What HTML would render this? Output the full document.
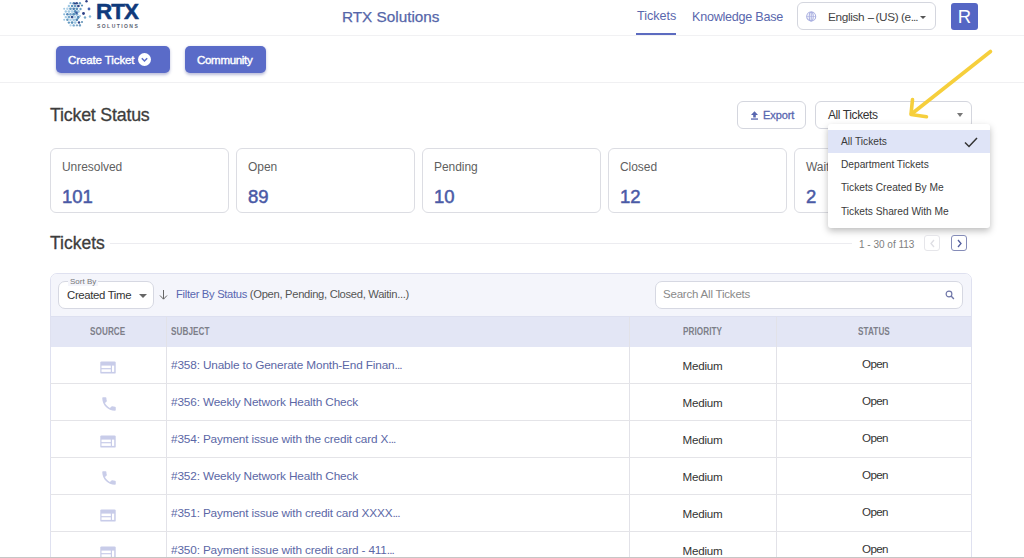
<!DOCTYPE html>
<html><head><meta charset="utf-8">
<style>
*{box-sizing:border-box;margin:0;padding:0}
html,body{width:1024px;height:558px;overflow:hidden;background:#fff;font-family:"Liberation Sans",sans-serif;color:#333}
.abs{position:absolute;white-space:nowrap}
svg{display:block}
.hdr{position:absolute;left:0;top:0;width:1024px;height:36px;border-bottom:1px solid #f1f1f3}
.logo{left:61px;top:0px}
.rtx{left:96px;top:-1px;font-size:22.4px;font-weight:bold;color:#0f3a7c;letter-spacing:-0.9px;-webkit-text-stroke:0.5px #0f3a7c}
.sol{left:97px;top:23px;font-size:5px;font-weight:bold;color:#5b6272;letter-spacing:1.45px}
.brand{left:342px;top:8px;font-size:15.3px;color:#5566a9;-webkit-text-stroke:0.25px #5566a9}
.nav1{left:637px;top:9px;font-size:12.6px;color:#5a67ad}
.nav1u{left:636px;top:33px;width:40px;height:2px;background:#5c6bc0}
.nav2{left:692px;top:10px;font-size:12.6px;color:#5a67ad;letter-spacing:-0.25px}
.lang{left:797px;top:2px;width:139px;height:28px;border:1px solid #d4d6de;border-radius:6px}
.langt{left:828px;top:10px;font-size:11.8px;color:#444;letter-spacing:-0.35px}
.caret{width:0;height:0;border-left:3.5px solid transparent;border-right:3.5px solid transparent;border-top:3.5px solid #555}
.avatar{left:951px;top:3px;width:27px;height:27px;background:#5566c4;border-radius:3px;color:#fff;font-size:18.5px;text-align:center;line-height:27px}
.tb{position:absolute;left:0;top:36px;width:1024px;height:47px;border-bottom:1px solid #f0f0f2}
.btn{position:absolute;top:46px;height:27px;background:#5a6bc8;border-radius:5px;color:#fff;font-size:11.5px;font-weight:bold;box-shadow:0 1.5px 3px rgba(60,70,150,.35)}
.btn span{position:absolute;top:8px;letter-spacing:-0.1px;font-weight:normal;-webkit-text-stroke:0.4px #fff}
.h1{left:50px;top:105px;font-size:17.8px;color:#3d3d3d;letter-spacing:-0.2px;-webkit-text-stroke:0.3px #3d3d3d}
.obtn{top:101px;height:28px;border:1px solid #d4d6de;border-radius:6px;background:#fff}
.card{top:148px;width:179px;height:65px;border:1px solid #dcdde3;border-radius:6px;background:#fff}
.card .l{position:absolute;left:11px;top:11px;font-size:12px;color:#5f5f5f;letter-spacing:-0.05px}
.card .v{position:absolute;left:11px;top:37px;font-size:18.5px;color:#4a5aa6;-webkit-text-stroke:0.5px #4a5aa6}
.menu{left:828px;top:124px;width:162px;height:104px;background:#fff;border-radius:3px;box-shadow:0 3px 7px rgba(0,0,0,.26)}
.mi{position:absolute;left:13px;font-size:10.2px;color:#3a3a3a;white-space:nowrap}
.h2{left:50px;top:233px;font-size:17.5px;color:#3d3d3d;letter-spacing:0px;-webkit-text-stroke:0.3px #3d3d3d}
.hline{left:110px;top:243px;width:742px;height:1px;background:#ececf0}
.pg{left:859px;top:239px;font-size:10px;color:#808080}
.pbtn{top:235px;width:16px;height:16px;border:1px solid #dcdde3;border-radius:3px;background:#fff}
.tbl{left:50px;top:273px;width:922px;height:300px;border:1px solid #dfe1f0;border-radius:7px;overflow:hidden;background:#fff}
.filt{position:absolute;left:0;top:0;width:922px;height:42px;background:#f4f5fb}
.sel{position:absolute;left:7px;top:7px;width:96px;height:28px;border:1px solid #d6d8e2;border-radius:7px;background:#fff}
.search{position:absolute;left:604px;top:7px;width:308px;height:28px;border:1px solid #d6d8e2;border-radius:7px;background:#fff}
.th{position:absolute;left:0;top:42px;width:922px;height:31px;background:#e3e6f5;border-top:1px solid #dde0f0}
.th div{position:absolute;top:9px;font-size:10.2px;font-weight:bold;color:#7d7f89;letter-spacing:0.1px;transform:scaleX(0.8);transform-origin:0 0}
.vl{position:absolute;top:43px;width:1px;height:300px;background:#e2e2e8}
.row{position:absolute;left:50px;width:922px;height:37px;border-bottom:1px solid #e4e4e8}
.row .c0{position:absolute;left:50px;top:14px}
.row .c0.iphone{left:50px;top:11px}
.row .c1{position:absolute;left:121px;top:11px;font-size:11.8px;color:#5b67a6;white-space:nowrap;letter-spacing:-0.15px}
.row .c2{position:absolute;left:579px;width:147px;top:12px;font-size:11.6px;color:#333;text-align:center;letter-spacing:-0.2px}
.row .c3{position:absolute;left:727px;width:196px;top:10px;font-size:11.6px;color:#333;text-align:center;letter-spacing:-0.65px}
i{font-style:normal;letter-spacing:-0.9px}
.bot{left:0;top:557px;width:1024px;height:1px;background:#c6c6c6}
</style></head><body>
<div class="hdr"></div>
<div class="abs logo"><svg width="34" height="30" viewBox="0 0 34 30"><circle cx="9.5" cy="3.2" r="1.10" fill="#8fbcdc"/><circle cx="12.7" cy="3.2" r="1.19" fill="#4f80b2"/><circle cx="15.8" cy="3.2" r="1.22" fill="#34508f"/><circle cx="18.9" cy="3.2" r="1.19" fill="#6499c0"/><circle cx="7.9" cy="6.0" r="1.19" fill="#a0c8e3"/><circle cx="11.1" cy="6.0" r="1.30" fill="#5a92bb"/><circle cx="14.2" cy="6.0" r="1.35" fill="#6499c0"/><circle cx="17.4" cy="6.0" r="1.35" fill="#2c4386"/><circle cx="3.2" cy="8.8" r="1.00" fill="#a0c8e3"/><circle cx="6.4" cy="8.8" r="1.23" fill="#b2d3ea"/><circle cx="9.5" cy="8.8" r="1.35" fill="#6499c0"/><circle cx="12.7" cy="8.8" r="1.41" fill="#4f80b2"/><circle cx="15.8" cy="8.8" r="1.42" fill="#5a92bb"/><circle cx="4.8" cy="11.5" r="1.20" fill="#a0c8e3"/><circle cx="7.9" cy="11.5" r="1.35" fill="#a0c8e3"/><circle cx="11.1" cy="11.5" r="1.42" fill="#b2d3ea"/><circle cx="14.2" cy="11.5" r="1.44" fill="#5a92bb"/><circle cx="17.4" cy="11.5" r="1.44" fill="#a0c8e3"/><circle cx="3.2" cy="14.3" r="1.11" fill="#8fbcdc"/><circle cx="6.4" cy="14.3" r="1.31" fill="#5588b8"/><circle cx="9.5" cy="14.3" r="1.41" fill="#78a9cd"/><circle cx="12.7" cy="14.3" r="1.44" fill="#5a92bb"/><circle cx="15.8" cy="14.3" r="1.45" fill="#78a9cd"/><circle cx="4.8" cy="17.1" r="1.20" fill="#a0c8e3"/><circle cx="7.9" cy="17.1" r="1.35" fill="#78a9cd"/><circle cx="11.1" cy="17.1" r="1.42" fill="#34508f"/><circle cx="14.2" cy="17.1" r="1.44" fill="#b2d3ea"/><circle cx="17.4" cy="17.1" r="1.44" fill="#5588b8"/><circle cx="3.2" cy="19.8" r="1.00" fill="#a0c8e3"/><circle cx="6.4" cy="19.8" r="1.23" fill="#6499c0"/><circle cx="9.5" cy="19.8" r="1.35" fill="#b2d3ea"/><circle cx="12.7" cy="19.8" r="1.41" fill="#a0c8e3"/><circle cx="15.8" cy="19.8" r="1.42" fill="#5588b8"/><circle cx="7.9" cy="22.6" r="1.19" fill="#6499c0"/><circle cx="11.1" cy="22.6" r="1.30" fill="#5a92bb"/><circle cx="14.2" cy="22.6" r="1.35" fill="#a0c8e3"/><circle cx="9.5" cy="25.4" r="1.10" fill="#b2d3ea"/><circle cx="12.7" cy="25.4" r="1.19" fill="#78a9cd"/><circle cx="15.8" cy="25.4" r="1.22" fill="#b2d3ea"/><circle cx="18.9" cy="25.4" r="1.19" fill="#78a9cd"/><circle cx="14.0" cy="3.5" r="1.10" fill="#2c4386"/><circle cx="15.5" cy="12.8" r="1.30" fill="#3a5aa0"/><circle cx="22.5" cy="13.5" r="1.40" fill="#2c3f86"/><circle cx="18.0" cy="22.5" r="1.20" fill="#2c4386"/><circle cx="25.5" cy="1.2" r="1.20" fill="#2c3f86"/><circle cx="28.0" cy="9.0" r="1.40" fill="#4562b0"/><circle cx="21.0" cy="5.5" r="1.10" fill="#5c8fb5"/><circle cx="19.5" cy="9.0" r="1.20" fill="#6aa0c4"/><circle cx="24.0" cy="17.5" r="1.20" fill="#7aaacb"/><circle cx="29.0" cy="16.5" r="1.20" fill="#8ab8d8"/><circle cx="21.0" cy="22.0" r="1.00" fill="#5c8fb5"/><circle cx="16.0" cy="25.3" r="0.80" fill="#6b8fb0"/><circle cx="19.0" cy="25.0" r="0.70" fill="#6b8fb0"/><circle cx="17.0" cy="18.0" r="1.10" fill="#5b92ba"/><circle cx="19.0" cy="16.0" r="1.00" fill="#9cc4e0"/></svg></div>
<div class="abs rtx">RTX</div>
<div class="abs sol">SOLUTIONS</div>
<div class="abs brand">RTX Solutions</div>
<div class="abs nav1">Tickets</div>
<div class="abs nav1u"></div>
<div class="abs nav2">Knowledge Base</div>
<div class="abs lang"></div>
<div class="abs" style="left:806px;top:11px"><svg width="11" height="11" viewBox="0 0 11 11"><g fill="none" stroke="#a9afe0" stroke-width="1.1"><circle cx="5.2" cy="5.5" r="4.5"/><ellipse cx="5.2" cy="5.5" rx="2" ry="4.5"/><line x1="5.2" y1="1" x2="5.2" y2="10"/><line x1="0.8" y1="5.5" x2="9.6" y2="5.5" stroke-width="0.6"/></g></svg></div>
<div class="abs langt"><span style="position:absolute;left:0">English</span><span style="position:absolute;left:40px;top:1px;font-size:10.5px;-webkit-text-stroke:0.2px #444">–</span><span style="position:absolute;left:47.5px">(US)</span><span style="position:absolute;left:73px">(e<i style="letter-spacing:-1px">...</i></span></div>
<div class="abs caret" style="left:920px;top:16px"></div>
<div class="abs avatar">R</div>
<div class="tb"></div>
<div class="btn" style="left:56px;width:114px"><span style="left:12px">Create Ticket</span><svg style="position:absolute;left:82px;top:7px" width="13" height="13" viewBox="0 0 13 13"><circle cx="6.5" cy="6.5" r="6.5" fill="#fff"/><path d="M3.8 5.3 L6.5 8 L9.2 5.3" fill="none" stroke="#5a6bc8" stroke-width="1.5"/></svg></div>
<div class="btn" style="left:185px;width:81px"><span style="left:12px;letter-spacing:-0.3px">Community</span></div>
<div class="abs h1">Ticket Status</div>
<div class="abs obtn" style="left:737px;width:69px"></div>
<div class="abs" style="left:750px;top:111px"><svg width="9" height="9" viewBox="0 0 9 9"><path d="M4.5 0.3 L8 4.1 H5.8 V6.4 H3.2 V4.1 H1 Z" fill="#5866b0"/><rect x="1" y="7.4" width="7" height="1.3" fill="#5866b0"/></svg></div>
<div class="abs" style="left:763px;top:109px;font-size:11px;color:#5866b0;letter-spacing:-0.1px;-webkit-text-stroke:0.3px #5866b0">Export</div>
<div class="abs obtn" style="left:815px;width:157px"></div>
<div class="abs" style="left:828px;top:108px;font-size:12px;color:#333;letter-spacing:-0.4px">All Tickets</div>
<div class="abs caret" style="left:957px;top:113px;border-left:3.75px solid transparent;border-right:3.75px solid transparent;border-top:4px solid #777"></div>
<div class="abs card" style="left:50px"><div class="l">Unresolved</div><div class="v">101</div></div>
<div class="abs card" style="left:236px"><div class="l">Open</div><div class="v">89</div></div>
<div class="abs card" style="left:422px"><div class="l">Pending</div><div class="v">10</div></div>
<div class="abs card" style="left:608px"><div class="l">Closed</div><div class="v">12</div></div>
<div class="abs card" style="left:794px"><div class="l">Waiting</div><div class="v">2</div></div>
<div class="abs menu">
 <div style="position:absolute;left:0;top:6px;width:162px;height:23px;background:#dfe4f7"></div>
 <div class="mi" style="top:12px">All Tickets</div>
 <svg style="position:absolute;left:136px;top:13px" width="14" height="11" viewBox="0 0 14 11"><path d="M1 5.5 L5 9.5 L13 1" fill="none" stroke="#333" stroke-width="1.5"/></svg>
 <div class="mi" style="top:35px">Department Tickets</div>
 <div class="mi" style="top:58px">Tickets Created By Me</div>
 <div class="mi" style="top:82px">Tickets Shared With Me</div>
</div>
<div class="abs h2">Tickets</div>
<div class="abs hline"></div>
<div class="abs pg">1 - 30 of 113</div>
<div class="abs pbtn" style="left:924px;border-color:#e6e6ea"><svg style="position:absolute;left:4px;top:3px" width="7" height="9" viewBox="0 0 7 9"><path d="M5 1 L2 4.5 L5 8" fill="none" stroke="#dedee3" stroke-width="1.3"/></svg></div>
<div class="abs pbtn" style="left:951px;border-color:#858cb8"><svg style="position:absolute;left:4px;top:3px" width="7" height="9" viewBox="0 0 7 9"><path d="M2 1 L5 4.5 L2 8" fill="none" stroke="#535e9e" stroke-width="1.3"/></svg></div>
<div class="abs tbl">
 <div class="filt"></div>
 <div class="sel"><div style="position:absolute;left:9px;top:-5px;font-size:8px;color:#777;background:#f4f5fb;padding:0 2px;line-height:9px">Sort By</div><div style="position:absolute;left:8px;top:7px;font-size:11.4px;color:#333;letter-spacing:-0.35px">Created Time</div><div class="caret" style="position:absolute;left:80px;top:12px;border-left:4px solid transparent;border-right:4px solid transparent;border-top:4.5px solid #666"></div></div>
 <div style="position:absolute;left:108px;top:16px"><svg width="9" height="10" viewBox="0 0 9 10"><path d="M4.5 0 V9 M1 5.5 L4.5 9.2 L8 5.5" fill="none" stroke="#666" stroke-width="1"/></svg></div>
 <div style="position:absolute;left:125px;top:14px;font-size:11.2px;color:#5866b0;white-space:nowrap;letter-spacing:-0.3px">Filter By Status <span style="color:#555">(Open, Pending, Closed, Waitin...)</span></div>
 <div class="search"><div style="position:absolute;left:7px;top:6px;font-size:11.5px;color:#8a8a8a;letter-spacing:-0.2px">Search All Tickets</div><svg style="position:absolute;left:289px;top:8px" width="10" height="10" viewBox="0 0 10 10"><circle cx="4" cy="4" r="2.9" fill="none" stroke="#6f76a8" stroke-width="1.15"/><path d="M6.1 6.1 L8.9 8.9" stroke="#6f76a8" stroke-width="1.4"/></svg></div>
 <div class="th">
  <div style="left:39px">SOURCE</div>
  <div style="left:120px">SUBJECT</div>
  <div style="left:632px">PRIORITY</div>
  <div style="left:807px">STATUS</div>
 </div>
 <div class="vl" style="left:115px"></div>
 <div class="vl" style="left:578px"></div>
 <div class="vl" style="left:725px"></div>
</div>
<div class="row" style="top:347px"><div class="c0 icard"><svg width="16" height="13" viewBox="0 0 16 13"><rect x="0.3" y="0.4" width="15.4" height="12.2" rx="1.2" fill="#c8cce9"/><rect x="1.5" y="4.6" width="9.3" height="2.5" fill="#fff"/><rect x="1.5" y="8.3" width="9.3" height="2.6" fill="#fff"/><rect x="12" y="4.6" width="2.2" height="6.3" fill="#fff"/></svg></div><div class="c1">#358: Unable to Generate Month-End Finan<i>...</i></div><div class="c2">Medium</div><div class="c3">Open</div></div>
<div class="row" style="top:384px"><div class="c0 iphone"><svg width="18" height="18" viewBox="0 0 24 24"><path fill="#c9cde9" d="M6.6 10.8c1.4 2.8 3.8 5.1 6.6 6.6l2.2-2.2c.3-.3.7-.4 1-.2 1.1.4 2.3.6 3.6.6.6 0 1 .4 1 1V20c0 .6-.4 1-1 1C10.6 21 3 13.4 3 4c0-.6.4-1 1-1h3.5c.6 0 1 .4 1 1 0 1.3.2 2.5.6 3.6.1.3 0 .7-.2 1l-2.3 2.2z"/></svg></div><div class="c1">#356: Weekly Network Health Check</div><div class="c2">Medium</div><div class="c3">Open</div></div>
<div class="row" style="top:421px"><div class="c0 icard"><svg width="16" height="13" viewBox="0 0 16 13"><rect x="0.3" y="0.4" width="15.4" height="12.2" rx="1.2" fill="#c8cce9"/><rect x="1.5" y="4.6" width="9.3" height="2.5" fill="#fff"/><rect x="1.5" y="8.3" width="9.3" height="2.6" fill="#fff"/><rect x="12" y="4.6" width="2.2" height="6.3" fill="#fff"/></svg></div><div class="c1">#354: Payment issue with the credit card X<i>...</i></div><div class="c2">Medium</div><div class="c3">Open</div></div>
<div class="row" style="top:458px"><div class="c0 iphone"><svg width="18" height="18" viewBox="0 0 24 24"><path fill="#c9cde9" d="M6.6 10.8c1.4 2.8 3.8 5.1 6.6 6.6l2.2-2.2c.3-.3.7-.4 1-.2 1.1.4 2.3.6 3.6.6.6 0 1 .4 1 1V20c0 .6-.4 1-1 1C10.6 21 3 13.4 3 4c0-.6.4-1 1-1h3.5c.6 0 1 .4 1 1 0 1.3.2 2.5.6 3.6.1.3 0 .7-.2 1l-2.3 2.2z"/></svg></div><div class="c1">#352: Weekly Network Health Check</div><div class="c2">Medium</div><div class="c3">Open</div></div>
<div class="row" style="top:495px"><div class="c0 icard"><svg width="16" height="13" viewBox="0 0 16 13"><rect x="0.3" y="0.4" width="15.4" height="12.2" rx="1.2" fill="#c8cce9"/><rect x="1.5" y="4.6" width="9.3" height="2.5" fill="#fff"/><rect x="1.5" y="8.3" width="9.3" height="2.6" fill="#fff"/><rect x="12" y="4.6" width="2.2" height="6.3" fill="#fff"/></svg></div><div class="c1">#351: Payment issue with credit card XXXX<i>...</i></div><div class="c2">Medium</div><div class="c3">Open</div></div>
<div class="row" style="top:532px"><div class="c0 icard"><svg width="16" height="13" viewBox="0 0 16 13"><rect x="0.3" y="0.4" width="15.4" height="12.2" rx="1.2" fill="#c8cce9"/><rect x="1.5" y="4.6" width="9.3" height="2.5" fill="#fff"/><rect x="1.5" y="8.3" width="9.3" height="2.6" fill="#fff"/><rect x="12" y="4.6" width="2.2" height="6.3" fill="#fff"/></svg></div><div class="c1">#350: Payment issue with credit card - 411<i>...</i></div><div class="c2">Medium</div><div class="c3">Open</div></div>

<svg class="abs" style="left:880px;top:40px" width="130" height="90" viewBox="880 40 130 90"><g fill="none" stroke="#f6cf3c" stroke-width="3.6" stroke-linecap="round" stroke-linejoin="round"><path d="M990.5 51.5 L911.5 114"/><path d="M912.5 99.5 L911 114.5 L926.5 116.8"/></g></svg>
<div class="abs bot"></div>
</body></html>
